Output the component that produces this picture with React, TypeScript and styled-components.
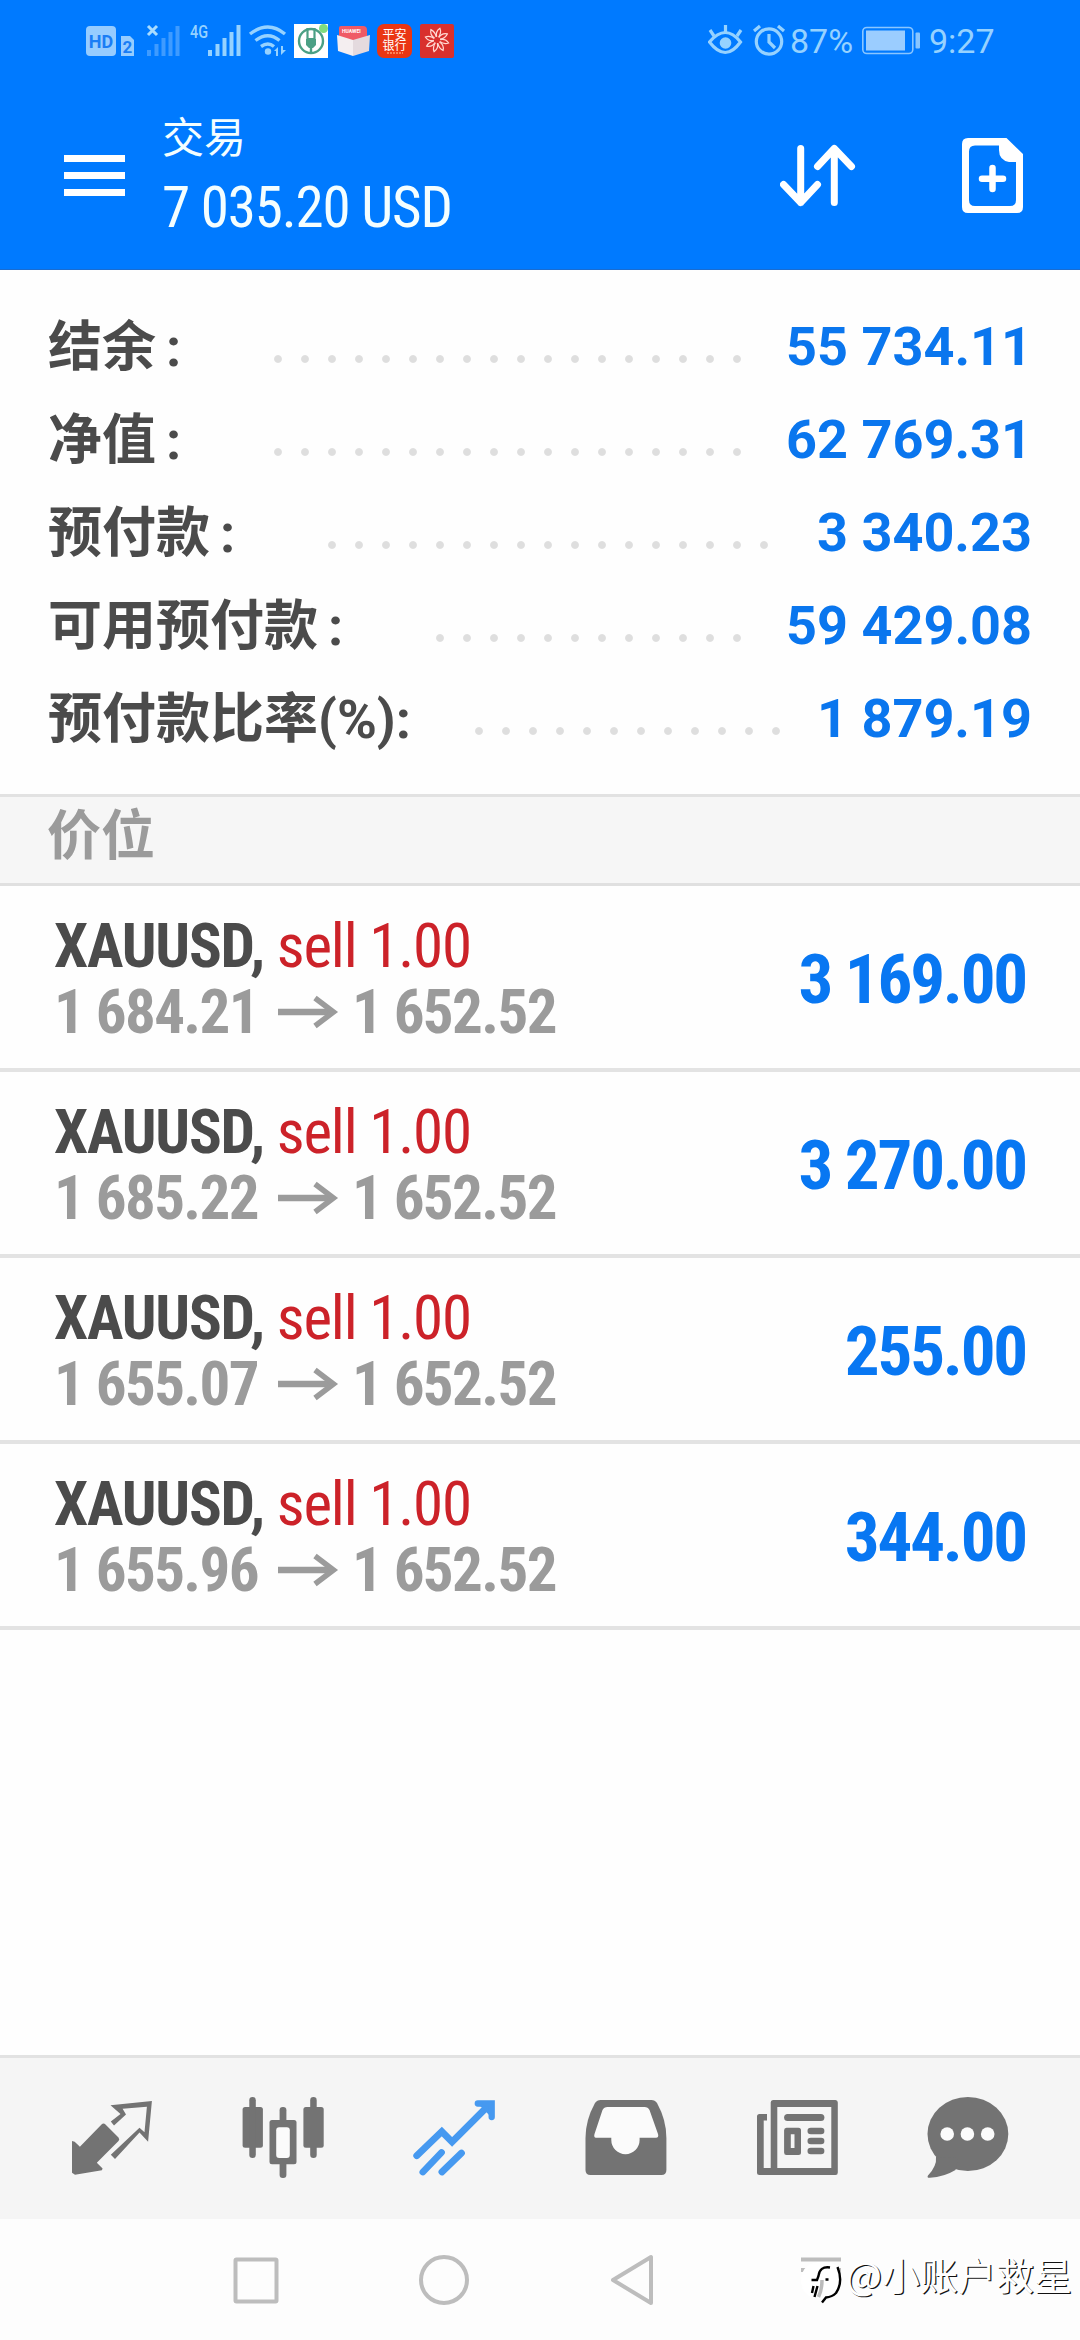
import React from "react";
import styled, { createGlobalStyle, css } from "styled-components";

const GlobalStyle = createGlobalStyle`
  *, *::before, *::after { box-sizing: border-box; }
  body { margin: 0; background: #fefefe; }
`;

const sans = css`
  font-family: "Roboto", "Noto Sans CJK SC", sans-serif;
`;
const condensed = css`
  font-family: "Roboto Condensed", "Roboto", "Noto Sans CJK SC", sans-serif;
  font-stretch: 75%;
`;

const Screen = styled.div`
  ${sans}
  width: 1080px;
  height: 2340px;
  display: flex;
  flex-direction: column;
  background: #fefefe;
  overflow: hidden;
  white-space: nowrap;
`;

const Top = styled.header`
  height: 270px;
  flex: none;
  background: #007aff;
  border-bottom: 1px solid #1a6cd0;
  color: #f4feff;
`;

const StatusBar = styled.div`
  height: 82px;
  padding: 0 87px 0 86px;
  display: flex;
  align-items: center;
  justify-content: space-between;
`;

const StatusRight = styled.div`
  display: flex;
  align-items: center;
  color: #96d2ff;
  font-size: 34px;
  line-height: 40px;
`;

const StatusText = styled.span<{ $width: number; $left: number }>`
  width: ${(p) => p.$width}px;
  margin-left: ${(p) => p.$left}px;
`;

const AppBar = styled.div`
  height: 187px;
  padding: 0 57px 0 64px;
  display: flex;
  align-items: flex-start;
`;

const Burger = styled.div`
  width: 61px;
  height: 41px;
  margin-top: 73px;
  display: flex;
  flex-direction: column;
  justify-content: space-between;
`;
const BurgerBar = styled.span`
  height: 7px;
  background: #fff;
`;

const Titles = styled.div`
  margin: 25px 0 0 37px;
  flex: 1;
`;
const Title = styled.div`
  font-family: "Noto Sans CJK SC", sans-serif;
  font-size: 42px;
  line-height: 56px;
  font-weight: 400;
`;
const Profit = styled.div`
  ${condensed}
  font-size: 57px;
  line-height: 66px;
  margin-top: 12px;
  letter-spacing: -1.2px;
`;

const BarIcon = styled.svg<{ $left?: number }>`
  flex: none;
  margin: 55px 0 0 ${(p) => p.$left ?? 0}px;
`;

const Summary = styled.section`
  height: 524px;
  flex: none;
  padding: 30px 48px 0;
`;
const SummaryRow = styled.div`
  height: 93px;
  display: flex;
  align-items: center;
  font-size: 54px;
  line-height: 93px;
  font-weight: 700;
`;
const Label = styled.span`
  color: #4b4b4b;
  margin-top: 2px;
`;
const Colon = styled.span<{ $wide: boolean }>`
  display: inline-block;
  width: ${(p) => (p.$wide ? 54 : 15)}px;
  padding-left: ${(p) => (p.$wide ? 10 : 0)}px;
`;
const Leader = styled.span<{ $count: number }>`
  width: ${(p) => p.$count * 27}px;
  height: 8px;
  margin: 25px 0 0 64px;
  background: radial-gradient(circle at 4px 4px, #dedede 3.4px, transparent 4.4px) 0 0 / 27px 8px repeat-x;
`;
const Figure = styled.span`
  margin-left: auto;
  color: #0a76ee;
`;

const SectionTitle = styled.h2`
  margin: 0;
  height: 92px;
  flex: none;
  padding-left: 47px;
  border-top: 3px solid #e2e2e2;
  border-bottom: 3px solid #e0e0e0;
  background: #f6f6f6;
  color: #9b9b9b;
  font-size: 54px;
  line-height: 80px;
  font-weight: 700;
`;

const Trade = styled.article`
  height: 186px;
  flex: none;
  padding: 0 54px 0 54px;
  border-bottom: 4px solid #e3e3e3;
  display: flex;
  align-items: center;
  justify-content: space-between;
`;
const TradeInfo = styled.div`
  ${condensed}
  font-size: 61px;
  line-height: 66px;
  margin-top: 3px;
`;
const Symbol = styled.div`
  font-weight: 700;
  color: #4b4b4b;
  letter-spacing: -1.2px;
`;
const Side = styled.span`
  font-weight: 400;
  color: #cc2229;
`;
const Prices = styled.div`
  display: flex;
  align-items: center;
  font-weight: 700;
  color: #9b9b9b;
  letter-spacing: -1.6px;
`;
const Gain = styled.div`
  ${condensed}
  margin-top: 5px;
  font-size: 69px;
  line-height: 80px;
  font-weight: 700;
  letter-spacing: -2.2px;
  color: #0877f2;
`;

const Spacer = styled.div`
  flex: 1;
`;

const TabBar = styled.nav`
  height: 164px;
  flex: none;
  padding: 0 26px;
  border-top: 3px solid #e2e2e2;
  background: #f5f5f5;
  display: grid;
  grid-template-columns: repeat(6, 1fr);
  justify-items: center;
  color: #737373;
`;
const TabIcon = styled.svg`
  margin-top: 30px;
  width: 100px;
  height: 100px;
`;

const SystemNav = styled.footer`
  position: relative;
  height: 121px;
  flex: none;
  padding: 33px 0 0 230px;
  display: flex;
  gap: 136px;
  background: #fdfdfd;
`;
const NavIcon = styled.svg`
  flex: none;
  width: 53px;
  height: 54px;
  fill: none;
  stroke: #bdbdbd;
  stroke-width: 4px;
`;
const Watermark = styled.div`
  position: absolute;
  left: 800px;
  top: 29px;
  display: flex;
  align-items: flex-start;
  color: #fff;
  font-family: "Noto Sans CJK SC", sans-serif;
  font-size: 38px;
  line-height: 52px;
  text-shadow: 1.3px 1.3px 0 #111;
`;

const StatusIcons = () => (
  <svg width="370" height="40" viewBox="86 21 370 40">
    <rect x="86" y="26" width="30" height="30" rx="4" fill="#96ccff" />
    <text x="101" y="47.500" fontSize="18" fontWeight="700" textAnchor="middle" fill="#1a7df5">HD</text>
    <path d="M121 36h9l4 4v16h-13z" fill="#96ccff" />
    <text x="127.500" y="53" fontSize="17" fontWeight="700" textAnchor="middle" fill="#1a7df5">2</text>
    <path d="M148 26l9 9m0-9l-9 9" stroke="#a8dcff" strokeWidth="3" />
    <path d="M149 56v-6M156.500 56v-12M163.500 56v-18M170.500 56v-24M177.500 56v-30" stroke="#3f9bff" strokeWidth="4" />
    <text x="190" y="38" fontSize="17.500" fontWeight="500" textLength="18" lengthAdjust="spacingAndGlyphs" fill="#96d2ff">4G</text>
    <path d="M210 56v-6M217.500 56v-12M224.500 56v-18M231.500 56v-24M238.500 56v-31" stroke="#96d2ff" strokeWidth="4" />
    <g fill="none" stroke="#96d2ff" strokeWidth="3.400">
      <path d="M250 34q18-14 35 0M255.500 40.500q12.500-9.500 24 0M261 46.500q7-5 13 0" />
    </g>
    <circle cx="268" cy="51.500" r="3.200" fill="#96d2ff" />
    <path d="M274 51l4-4v9h-2v-5zM281 46v9l5-5h-3v-4z" fill="#96d2ff" />
    <rect x="294" y="24" width="34" height="34" fill="#fff" />
    <circle cx="323.500" cy="28.500" r="4.500" fill="#7fdc7f" />
    <circle cx="311" cy="41" r="12" fill="none" stroke="#4ba085" strokeWidth="2.400" />
    <path d="M307.500 28v11h7V28" fill="none" stroke="#4ba085" strokeWidth="2.200" />
    <path d="M306 39h10v6l-3 3h-4l-3-3zM309.800 48h2.400v6h-2.400z" fill="#4ba085" />
    <path d="M341 26h22q4 0 4 4v12h-28V28q0-2 2-2z" fill="#ef5a66" />
    <text x="342" y="33" fontSize="5" fontWeight="700" fill="#fff">HUAWEI</text>
    <path d="M337 35l16 5v16l-15-5z" fill="#f4eef0" />
    <path d="M370 35l-17 5v16l16-5z" fill="#e4dade" />
    <rect x="377" y="24" width="35" height="34" rx="7" fill="#ea3613" />
    <text x="394.500" y="39" fontSize="12" fontWeight="400" textAnchor="middle" fill="#fff">平安</text>
    <text x="394.500" y="49.500" fontSize="12" fontWeight="400" textAnchor="middle" fill="#fff">银行</text>
    <path d="M387 53h16" stroke="#ff9a70" strokeWidth="1.500" strokeDasharray="2 1" />
    <rect x="420" y="24" width="34" height="34" rx="2" fill="#d9302d" />
    <g fill="none" stroke="#ffd9d2" strokeWidth="1.200">
      {[0, 45, 90, 135, 180, 225, 270, 315].map((a) => (
        <path key={a} transform={`rotate(${a + 12} 437 40)`} d="M436 37q-2.500-5 1.500-9q2.500 4 0.500 9" />
      ))}
    </g>
  </svg>
);

const EyeAlarm = () => (
  <svg width="79" height="40" viewBox="708 21 79 40" fill="none" stroke="#96d2ff" strokeWidth="3.200">
    <path d="M709.500 42q16-19 31 0q-15 21-31 0z" />
    <circle cx="725.500" cy="43" r="5.800" fill="#96d2ff" stroke="none" />
    <path d="M725.500 25v8M710 30l4 6M741 30l-4 6" />
    <circle cx="769" cy="41.500" r="12.700" />
    <path d="M769 34v8l6 6M754 31l6-5M784 31l-6-5" />
  </svg>
);

const BatteryIcon = styled.svg`
  flex: none;
  margin-left: 9px;
`;
const Battery = () => (
  <BatteryIcon width="60" height="40" viewBox="861 21 60 40">
    <rect x="862.800" y="27.500" width="50" height="26" rx="4" fill="none" stroke="#8ac6ff" strokeWidth="1.600" />
    <rect x="866" y="30.500" width="39" height="20" fill="#9bcdff" />
    <rect x="915.500" y="32.500" width="4.500" height="16" rx="1" fill="#8ac6ff" />
  </BatteryIcon>
);

const PriceArrow = () => (
  <svg width="94" height="44" viewBox="4 0 94 44" fill="none" stroke="#9b9b9b" strokeWidth="6.500">
    <path d="M24 22H79" />
    <path d="M61 8L79.500 22L61 36" strokeWidth="5.500" />
  </svg>
);

const rows = [
  { label: "结余", value: "55 734.11", dots: 18, wide: true },
  { label: "净值", value: "62 769.31", dots: 18, wide: true },
  { label: "预付款", value: "3 340.23", dots: 17, wide: true },
  { label: "可用预付款", value: "59 429.08", dots: 12, wide: true },
  { label: "预付款比率(%)", value: "1 879.19", dots: 12, wide: false },
];

const trades = [
  { open: "1 684.21", gain: "3 169.00" },
  { open: "1 685.22", gain: "3 270.00" },
  { open: "1 655.07", gain: "255.00" },
  { open: "1 655.96", gain: "344.00" },
];

export default function App() {
  return (
    <Screen>
      <GlobalStyle />
      <Top>
        <StatusBar>
          <StatusIcons />
          <StatusRight>
            <EyeAlarm />
            <StatusText $width={62} $left={3}>87%</StatusText>
            <Battery />
            <StatusText $width={64} $left={8}>9:27</StatusText>
          </StatusRight>
        </StatusBar>
        <AppBar>
          <Burger><BurgerBar /><BurgerBar /><BurgerBar /></Burger>
          <Titles>
            <Title>交易</Title>
            <Profit>7 035.20 USD</Profit>
          </Titles>
          <BarIcon width="76" height="76" viewBox="780 137 76 76" fill="none" stroke="#fff" strokeWidth="7" strokeLinecap="round" strokeLinejoin="round">
            <path d="M800.700 148.500V202.500M783.500 184.500L800.700 202.500L817.500 184.500M834.300 202.500V148.500M817.500 166.500L834.300 148.500L851.500 166.500" />
          </BarIcon>
          <BarIcon $left={106} width="61" height="76" viewBox="962 137 61 76">
            <path fill="#fff" fillRule="evenodd" d="M968 138H1006.500L1023 154V207Q1023 213 1017 213H968Q962 213 962 207V144Q962 138 968 138ZM975 145.500Q969 145.500 969 151.500V200Q969 206 975 206H1010Q1016 206 1016 200V162H1009Q999 160 999 150V145.500Z" />
            <path d="M992.500 168V189M982 178.800H1003" stroke="#fff" strokeWidth="6.500" strokeLinecap="round" />
          </BarIcon>
        </AppBar>
      </Top>

      <Summary>
        {rows.map((r) => (
          <SummaryRow key={r.label}>
            <Label>{r.label}<Colon $wide={r.wide}>:</Colon></Label>
            <Leader $count={r.dots} />
            <Figure>{r.value}</Figure>
          </SummaryRow>
        ))}
      </Summary>

      <SectionTitle>价位</SectionTitle>

      {trades.map((t) => (
        <Trade key={t.open}>
          <TradeInfo>
            <Symbol>XAUUSD, <Side>sell 1.00</Side></Symbol>
            <Prices>{t.open}<PriceArrow />1 652.52</Prices>
          </TradeInfo>
          <Gain>{t.gain}</Gain>
        </Trade>
      ))}

      <Spacer />

      <TabBar>
        <TabIcon viewBox="0 0 100 100" fill="currentColor">
          <path d="M48.500 17.300L89.900 13L86.100 53.700L77.500 44.500L53 71L48.800 66.700L77.500 39.700L82.500 44.300L84.900 18.700L60.600 20.700L64 26.500L52 37.500L48.800 33.600L58.500 26Z" />
          <path d="M10 53L12.700 53.700L17.900 58.700L39.500 36.500Q41.500 34.500 43.500 36.500L56.500 49.500Q58 51.500 56.500 53L34.800 74.800L40.600 80.500L39.900 82.300L13 86.700L10 84.700Z" />
        </TabIcon>
        <TabIcon viewBox="0 0 100 100" fill="currentColor">
          <rect x="9.600" y="19" width="20.300" height="40.700" rx="2.500" />
          <rect x="16.300" y="9" width="6.500" height="61" rx="3.200" />
          <rect x="70.400" y="19" width="20.300" height="40.700" rx="2.500" />
          <rect x="77.200" y="9" width="6.500" height="61" rx="3.200" />
          <rect x="46.600" y="19" width="6.800" height="71" rx="3.200" />
          <rect x="36.500" y="32" width="27" height="44.300" rx="2.500" />
          <rect x="43.200" y="39.300" width="13.600" height="30.700" rx="3" fill="#fbfbfb" />
        </TabIcon>
        <TabIcon viewBox="0 0 100 100" fill="none" stroke="#4699f0" strokeWidth="6.800" strokeLinecap="round">
          <path d="M12.700 67.700L37.800 43.500L48.100 54L84 18" />
          <path d="M73.800 15.500H87.500V29.500Z" fill="#4699f0" stroke="none" />
          <path d="M73.800 15.500H87.700V29" strokeWidth="6.300" />
          <path d="M18.900 84L37.500 64.500M37.900 84L57.500 65" />
        </TabIcon>
        <TabIcon viewBox="0 0 100 100" fill="currentColor">
          <path d="M24.700 12H75.300Q79 12 81 15Q90.400 32 90.400 50V82Q90.400 87 85.400 87H14.500Q9.500 87 9.500 82V50Q9.500 32 19 15Q21 12 24.700 12Z" />
          <path fill="#fbfbfb" d="M31.500 19H68.500Q72 19 73.500 22L82 46Q83 49.700 80 49.700H63.600V52A14.100 14.100 0 0 1 35.300 52V49.700H20Q17.500 49.700 18.500 46L26.500 22Q28 19 31.500 19Z" />
        </TabIcon>
        <TabIcon viewBox="0 0 100 100" fill="currentColor">
          <path fillRule="evenodd" d="M26 12H88.500Q90.800 12 90.800 14.500V84.500Q90.800 87 88.500 87H12.500Q10 87 10 84.500V28.500Q10 26 12.500 26H20V32.500H16.700V80H23.700V14.500Q23.700 12 26 12ZM30.300 19V80H84.300V19Z" />
          <rect x="37.100" y="26" width="40.300" height="7" rx="3.500" />
          <path fillRule="evenodd" d="M39.500 39.700H51.500Q54 39.700 54 42.200V64.500Q54 67 51.500 67H39.500Q37.100 67 37.100 64.500V42.200Q37.100 39.700 39.500 39.700ZM43.800 46.300V60H47.500V46.300Z" />
          <rect x="60.500" y="39.700" width="16.900" height="6.600" rx="3.300" />
          <rect x="60.500" y="49.700" width="16.900" height="6.600" rx="3.300" />
          <rect x="60.500" y="59.700" width="16.900" height="6.600" rx="3.300" />
        </TabIcon>
        <TabIcon viewBox="0 0 100 100" fill="currentColor">
          <ellipse cx="49.900" cy="46" rx="40.400" ry="37" />
          <path d="M18 69Q19 78 10 87.500Q8.500 90 12 89.800Q26 89 37.500 82L40 70Z" />
          <circle cx="29.200" cy="46" r="6.800" fill="#fbfbfb" />
          <circle cx="49.400" cy="46" r="6.800" fill="#fbfbfb" />
          <circle cx="69.700" cy="46" r="6.800" fill="#fbfbfb" />
        </TabIcon>
      </TabBar>

      <SystemNav>
        <NavIcon viewBox="0 0 53 54"><rect x="5.500" y="7.500" width="41" height="42" rx="1" /></NavIcon>
        <NavIcon viewBox="0 0 53 54"><circle cx="25" cy="28" r="23" /></NavIcon>
        <NavIcon viewBox="0 0 53 54" strokeLinejoin="round"><path d="M5 28L43 5V51Z" /></NavIcon>
        <NavIcon viewBox="0 0 53 54"><path d="M4 7.500H44M4 18H44" /></NavIcon>
        <Watermark>
          <svg width="46" height="60" viewBox="0 0 46 60">
            <path d="M22 14Q42 14 42 32Q42 45 28 50L22 55V51Q1 50 1 32Q2 14 22 14Z" fill="#fff" />
            <path d="M22 32Q22 42 18.500 49" fill="none" stroke="#bbb" strokeWidth="3.500" />
            <path d="M37.500 19Q43.500 34 36 45Q32 49 26 49.500L22 54.500" fill="none" stroke="#000" strokeWidth="2.400" />
            <path d="M30 19.500Q19.500 18 18.500 28L17 32H11.500M17.500 38L14.500 49M13.500 38L12 45M25.500 31.500h3" fill="none" stroke="#000" strokeWidth="2.400" />
          </svg>
          <span>@小账户救星</span>
        </Watermark>
      </SystemNav>
    </Screen>
  );
}
